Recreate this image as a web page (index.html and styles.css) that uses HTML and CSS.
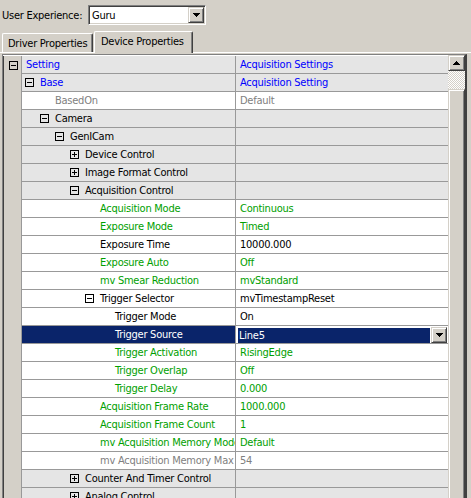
FILE: index.html
```html
<!DOCTYPE html>
<html>
<head>
<meta charset="utf-8">
<link rel="stylesheet" href="styles.css">
</head>
<body>
<div class="top">
  <span class="lbl">User Experience:</span>
  <div class="combo">
    <span class="cv">Guru</span>
    <span class="btn"><svg width="7" height="4" shape-rendering="crispEdges"><path d="M0 0h7v1H0zM1 1h5v1H1zM2 2h3v1H2zM3 3h1v1H3z" fill="#000"/></svg></span>
  </div>
</div>
<div class="tabs">
  <div class="tab">Driver Properties</div>
  <div class="tab active">Device Properties</div>
</div>
<div class="panel">
  <div class="grid">
    <div class="rows">
      <div class="row cat hdr">
        <div class="g"><svg class="tg" width="9" height="9" shape-rendering="crispEdges"><rect x="0.5" y="0.5" width="8" height="8" fill="none" stroke="#000"/><path d="M2 4.5h5" stroke="#000"/></svg></div>
        <div class="n hn blue">Setting</div>
        <div class="v blue">Acquisition Settings</div>
      </div>
      <div class="row cat">
        <div class="g"></div>
        <div class="n l1 blue"><svg class="tg" width="9" height="9" shape-rendering="crispEdges"><rect x="0.5" y="0.5" width="8" height="8" fill="none" stroke="#000"/><path d="M2 4.5h5" stroke="#000"/></svg>Base</div>
        <div class="v blue">Acquisition Setting</div>
      </div>
      <div class="row">
        <div class="g"></div>
        <div class="n l2 gray"><i class="sp"></i>BasedOn</div>
        <div class="v gray">Default</div>
      </div>
      <div class="row cat">
        <div class="g"></div>
        <div class="n l2"><svg class="tg" width="9" height="9" shape-rendering="crispEdges"><rect x="0.5" y="0.5" width="8" height="8" fill="none" stroke="#000"/><path d="M2 4.5h5" stroke="#000"/></svg>Camera</div>
        <div class="v"></div>
      </div>
      <div class="row cat">
        <div class="g"></div>
        <div class="n l3"><svg class="tg" width="9" height="9" shape-rendering="crispEdges"><rect x="0.5" y="0.5" width="8" height="8" fill="none" stroke="#000"/><path d="M2 4.5h5" stroke="#000"/></svg>GenICam</div>
        <div class="v"></div>
      </div>
      <div class="row cat">
        <div class="g"></div>
        <div class="n l4"><svg class="tg" width="9" height="9" shape-rendering="crispEdges"><rect x="0.5" y="0.5" width="8" height="8" fill="none" stroke="#000"/><path d="M2 4.5h5M4.5 2v5" stroke="#000"/></svg>Device Control</div>
        <div class="v"></div>
      </div>
      <div class="row cat">
        <div class="g"></div>
        <div class="n l4"><svg class="tg" width="9" height="9" shape-rendering="crispEdges"><rect x="0.5" y="0.5" width="8" height="8" fill="none" stroke="#000"/><path d="M2 4.5h5M4.5 2v5" stroke="#000"/></svg>Image Format Control</div>
        <div class="v"></div>
      </div>
      <div class="row cat">
        <div class="g"></div>
        <div class="n l4"><svg class="tg" width="9" height="9" shape-rendering="crispEdges"><rect x="0.5" y="0.5" width="8" height="8" fill="none" stroke="#000"/><path d="M2 4.5h5" stroke="#000"/></svg>Acquisition Control</div>
        <div class="v"></div>
      </div>
      <div class="row">
        <div class="g"></div>
        <div class="n l5 green"><i class="sp"></i>Acquisition Mode</div>
        <div class="v green">Continuous</div>
      </div>
      <div class="row">
        <div class="g"></div>
        <div class="n l5 green"><i class="sp"></i>Exposure Mode</div>
        <div class="v green">Timed</div>
      </div>
      <div class="row">
        <div class="g"></div>
        <div class="n l5"><i class="sp"></i>Exposure Time</div>
        <div class="v">10000.000</div>
      </div>
      <div class="row">
        <div class="g"></div>
        <div class="n l5 green"><i class="sp"></i>Exposure Auto</div>
        <div class="v green">Off</div>
      </div>
      <div class="row">
        <div class="g"></div>
        <div class="n l5 green"><i class="sp"></i>mv Smear Reduction</div>
        <div class="v green">mvStandard</div>
      </div>
      <div class="row">
        <div class="g"></div>
        <div class="n l5"><svg class="tg" width="9" height="9" shape-rendering="crispEdges"><rect x="0.5" y="0.5" width="8" height="8" fill="none" stroke="#000"/><path d="M2 4.5h5" stroke="#000"/></svg>Trigger Selector</div>
        <div class="v">mvTimestampReset</div>
      </div>
      <div class="row">
        <div class="g"></div>
        <div class="n l6"><i class="sp"></i>Trigger Mode</div>
        <div class="v">On</div>
      </div>
      <div class="row sel">
        <div class="g"></div>
        <div class="n l6"><i class="sp"></i>Trigger Source</div>
        <div class="v">
          <div class="ecombo">
            <span class="ev">Line5</span>
            <span class="btn"><svg width="7" height="4" shape-rendering="crispEdges"><path d="M0 0h7v1H0zM1 1h5v1H1zM2 2h3v1H2zM3 3h1v1H3z" fill="#000"/></svg></span>
          </div>
        </div>
      </div>
      <div class="row">
        <div class="g"></div>
        <div class="n l6 green"><i class="sp"></i>Trigger Activation</div>
        <div class="v green">RisingEdge</div>
      </div>
      <div class="row">
        <div class="g"></div>
        <div class="n l6 green"><i class="sp"></i>Trigger Overlap</div>
        <div class="v green">Off</div>
      </div>
      <div class="row">
        <div class="g"></div>
        <div class="n l6 green"><i class="sp"></i>Trigger Delay</div>
        <div class="v green">0.000</div>
      </div>
      <div class="row">
        <div class="g"></div>
        <div class="n l5 green"><i class="sp"></i>Acquisition Frame Rate</div>
        <div class="v green">1000.000</div>
      </div>
      <div class="row">
        <div class="g"></div>
        <div class="n l5 green"><i class="sp"></i>Acquisition Frame Count</div>
        <div class="v green">1</div>
      </div>
      <div class="row">
        <div class="g"></div>
        <div class="n l5 green"><i class="sp"></i>mv Acquisition Memory Mode</div>
        <div class="v green">Default</div>
      </div>
      <div class="row">
        <div class="g"></div>
        <div class="n l5 gray"><i class="sp"></i>mv Acquisition Memory Max</div>
        <div class="v gray">54</div>
      </div>
      <div class="row cat">
        <div class="g"></div>
        <div class="n l4"><svg class="tg" width="9" height="9" shape-rendering="crispEdges"><rect x="0.5" y="0.5" width="8" height="8" fill="none" stroke="#000"/><path d="M2 4.5h5M4.5 2v5" stroke="#000"/></svg>Counter And Timer Control</div>
        <div class="v"></div>
      </div>
      <div class="row cat">
        <div class="g"></div>
        <div class="n l4"><svg class="tg" width="9" height="9" shape-rendering="crispEdges"><rect x="0.5" y="0.5" width="8" height="8" fill="none" stroke="#000"/><path d="M2 4.5h5M4.5 2v5" stroke="#000"/></svg>Analog Control</div>
        <div class="v"></div>
      </div>
    </div>
    <div class="vs">
      <div class="sbup"><svg width="7" height="4" shape-rendering="crispEdges"><path d="M3 0h1v1H3zM2 1h3v1H2zM1 2h5v1H1zM0 3h7v1H0z" fill="#000"/></svg></div>
      <div class="track"></div>
      <div class="thumb"></div>
    </div>
  </div>
</div>
</body>
</html>
```
FILE: styles.css
```css
html, body {
  margin: 0;
  padding: 0;
  width: 471px;
  height: 498px;
  overflow: hidden;
  background: #d4d0c8;
  font-family: "DejaVu Sans Condensed", "Liberation Sans", sans-serif;
  font-size: 11px;
  letter-spacing: -0.25px;
  color: #000;
}

.top {
  display: flex;
  align-items: center;
  height: 20px;
  padding: 5px 0 0 2px;
}

.lbl {
  width: 86px;
  white-space: nowrap;
}

.combo {
  display: flex;
  align-items: center;
  box-sizing: border-box;
  width: 118px;
  height: 20px;
  background: #fff;
  border: 1px solid;
  border-color: #808080 #fff #fff #808080;
  box-shadow: inset 1px 1px #404040, inset -1px -1px #d4d0c8;
  padding: 1px;
}

.cv {
  flex: 1;
  padding-left: 2px;
}

.btn {
  display: flex;
  align-items: center;
  justify-content: center;
  box-sizing: border-box;
  width: 16px;
  height: 16px;
  background: #d4d0c8;
  border: 1px solid;
  border-color: #d4d0c8 #404040 #404040 #d4d0c8;
  box-shadow: inset 1px 1px #fff, inset -1px -1px #808080;
}

.tabs {
  display: flex;
  align-items: flex-end;
  height: 21px;
  margin-top: 6px;
  padding-left: 2px;
}

.tab {
  display: flex;
  align-items: center;
  box-sizing: border-box;
  height: 19px;
  width: 91px;
  padding: 0 0 0 5px;
  border: 1px solid;
  border-color: #fff #404040 transparent #fff;
  border-bottom: none;
  border-radius: 2px 2px 0 0;
  box-shadow: inset -1px 0 #808080;
  white-space: nowrap;
}

.tab.active {
  position: relative;
  z-index: 1;
  height: 22px;
  width: 99px;
  margin-left: 1px;
  margin-bottom: -1px;
  padding: 0 0 3px 6px;
  background: #d4d0c8;
}

.panel {
  border-top: 1px solid #fff;
  padding-top: 1px;
}

.grid {
  display: flex;
  margin-left: 2px;
  width: 465px;
  box-sizing: border-box;
  border-top: 1px solid #808080;
  border-left: 1px solid #808080;
  border-right: 2px solid #404040;
}

.rows {
  width: 445px;
  border-top: 1px solid #fff;
}

.row {
  display: flex;
  height: 18px;
  background: #fff;
}

.row.cat {
  background: #e5e5e5;
}

.g {
  box-sizing: border-box;
  width: 19px;
  height: 18px;
  flex: none;
  background: #d4d0c8;
  border-left: 1px solid #404040;
  border-right: 1px solid #999;
  display: flex;
  align-items: center;
  padding-left: 5px;
}

.n, .v {
  box-sizing: border-box;
  height: 18px;
  line-height: 17px;
  border-bottom: 1px solid #999;
  white-space: nowrap;
  overflow: hidden;
  display: flex;
  align-items: center;
}

.n {
  width: 214px;
  flex: none;
  border-right: 1px solid #999;
}

.v {
  width: 212px;
  flex: none;
  padding-left: 4px;
}

.hn { padding-left: 4px; }
.l1 { padding-left: 3px; }
.l2 { padding-left: 18px; }
.l3 { padding-left: 33px; }
.l4 { padding-left: 48px; }
.l5 { padding-left: 63px; }
.l6 { padding-left: 78px; }

.tg {
  flex: none;
  margin-right: 6px;
}

.sp {
  display: inline-block;
  flex: none;
  width: 15px;
}

.blue { color: #0000ff; }
.gray { color: #808080; }
.green { color: #00a000; }

.row.sel .n {
  background: #0a246a;
  color: #fff;
}

.row.sel .v {
  padding: 0 0 0 1px;
  align-items: flex-start;
}

.ecombo {
  display: flex;
  width: 210px;
  height: 17px;
  margin-top: 1px;
}

.ev {
  flex: 1;
  box-sizing: border-box;
  height: 17px;
  border: 1px solid #fff;
  background: #0a246a;
  color: #fff;
  line-height: 15px;
  padding-left: 1px;
}

.vs {
  width: 17px;
  display: flex;
  flex-direction: column;
  height: 460px;
}

.sbup {
  display: flex;
  align-items: center;
  justify-content: center;
  box-sizing: border-box;
  height: 16px;
  background: #d4d0c8;
  border: 1px solid;
  border-color: #d4d0c8 #404040 #404040 #d4d0c8;
  box-shadow: inset 1px 1px #fff, inset -1px -1px #808080;
}

.track {
  height: 18px;
  background: repeating-conic-gradient(#d4d0c8 0 25%, #fff 0 50%) 0 0 / 2px 2px;
}

.thumb {
  flex: 1;
  box-sizing: border-box;
  background: #d4d0c8;
  border: 1px solid;
  border-color: #d4d0c8 #404040 #404040 #d4d0c8;
  box-shadow: inset 1px 1px #fff, inset -1px -1px #808080;
}
```
